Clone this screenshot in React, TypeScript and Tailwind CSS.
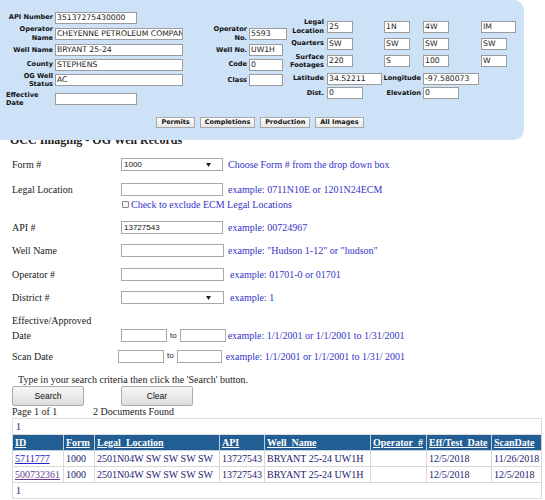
import React from "react";

const PIn = ({ w, v = "" }: { w: string; v?: string }) => (
  <div
    className={`${w} h-[12px] shrink-0 border border-[#9c9c9c] bg-white overflow-hidden whitespace-nowrap text-[7.7px] leading-[10px] pl-[1px] text-[#222] font-['DejaVu_Sans',sans-serif]`}
  >
    {v}
  </div>
);

const PLabel = ({ w, children, left = false }: { w: string; children: React.ReactNode; left?: boolean }) => (
  <div
    className={`${w} shrink-0 flex ${left ? "justify-start pl-[2px] text-left" : "justify-end text-right"} text-[6.6px] font-bold leading-[8.3px] text-[#111] font-['DejaVu_Sans',sans-serif] whitespace-nowrap`}
  >
    <div>{children}</div>
  </div>
);

const PBtn = ({ children }: { children: React.ReactNode }) => (
  <div className="h-[11px] px-[4px] flex items-center border border-[#a8a8a8] bg-gradient-to-b from-[#ffffff] to-[#e6e6e6] text-[6.5px] font-bold text-[#111] font-['DejaVu_Sans',sans-serif] leading-[9px]">
    {children}
  </div>
);

const FIn = ({ w, v = "" }: { w: string; v?: string }) => (
  <div
    className={`${w} h-[13px] shrink-0 border border-[#a9a9a9] bg-white flex items-center pl-[2px] text-[8px] text-[#111] font-['Liberation_Sans',sans-serif] overflow-hidden whitespace-nowrap`}
  >
    {v}
  </div>
);

const FSelect = ({ v = "" }: { v?: string }) => (
  <div className="w-[102px] h-[13px] shrink-0 border border-[#a9a9a9] bg-white flex items-center justify-between pl-[2px] pr-[11px] text-[8px] text-[#111] font-['Liberation_Sans',sans-serif]">
    <span>{v}</span>
    <svg width="5" height="4" viewBox="0 0 5 4">
      <polygon points="0,0 5,0 2.5,4" fill="#222" />
    </svg>
  </div>
);

const Ex = ({ children, ml = "ml-[5px]" }: { children: React.ReactNode; ml?: string }) => (
  <span className={`${ml} text-[#3434c8] whitespace-nowrap`}>{children}</span>
);

const To = () => (
  <span className="mx-[3px] text-[8px] text-[#222] font-['Liberation_Sans',sans-serif]">to</span>
);

const headers = ["ID", "Form", "Legal_Location", "API", "Well_Name", "Operator_#", "Eff/Test_Date", "ScanDate"];

const rows = [
  { id: "5711777", visited: false, form: "1000", loc: "2501N04W SW SW SW SW", api: "13727543", name: "BRYANT 25-24 UW1H", op: "", eff: "12/5/2018", scan: "11/26/2018" },
  { id: "500732361", visited: true, form: "1000", loc: "2501N04W SW SW SW SW", api: "13727543", name: "BRYANT 25-24 UW1H", op: "", eff: "12/5/2018", scan: "12/5/2018" },
];

export default function App() {
  return (
    <div className="relative w-[545px] h-[500px] overflow-hidden bg-white font-['Liberation_Serif',serif] text-[10px] text-[#222]">
      {/* Overlay panel */}
      <div className="absolute left-0 top-0 z-10 w-[524px] h-[140px] bg-[#cde1f7] rounded-tr-[10px] rounded-br-[10px] pt-[10px] flex flex-col">
        <div className="flex items-start h-[99px]">
          {/* Column 1 */}
          <div className="ml-[4px] flex flex-col">
            <div className="h-[15px] flex items-center gap-[2px]">
              <PLabel w="w-[49px]">API Number</PLabel>
              <PIn w="w-[82px]" v="35137275430000" />
            </div>
            <div className="h-[17px] flex items-center gap-[2px]">
              <PLabel w="w-[49px]">Operator<br />Name</PLabel>
              <PIn w="w-[128px]" v="CHEYENNE PETROLEUM COMPANY" />
            </div>
            <div className="h-[16px] flex items-center gap-[2px]">
              <PLabel w="w-[49px]">Well Name</PLabel>
              <PIn w="w-[128px]" v="BRYANT 25-24" />
            </div>
            <div className="h-[13px] flex items-center gap-[2px]">
              <PLabel w="w-[49px]">County</PLabel>
              <PIn w="w-[128px]" v="STEPHENS" />
            </div>
            <div className="h-[18px] flex items-center gap-[2px]">
              <PLabel w="w-[49px]">OG Well<br />Status</PLabel>
              <PIn w="w-[128px]" v="AC" />
            </div>
            <div className="h-[20px] flex items-center gap-[2px]">
              <PLabel w="w-[49px]" left>Effective<br />Date</PLabel>
              <PIn w="w-[82px]" v="" />
            </div>
          </div>

          {/* Column 2 */}
          <div className="ml-[28px] mt-[15px] flex flex-col">
            <div className="h-[17px] flex items-center gap-[2px]">
              <PLabel w="w-[36px]">Operator<br />No.</PLabel>
              <PIn w="w-[38px]" v="5593" />
            </div>
            <div className="h-[16px] flex items-center gap-[2px]">
              <PLabel w="w-[36px]">Well No.</PLabel>
              <PIn w="w-[34px]" v="UW1H" />
            </div>
            <div className="h-[13px] flex items-center gap-[2px]">
              <PLabel w="w-[36px]">Code</PLabel>
              <PIn w="w-[34px]" v="0" />
            </div>
            <div className="h-[18px] flex items-center gap-[2px]">
              <PLabel w="w-[36px]">Class</PLabel>
              <PIn w="w-[34px]" v="" />
            </div>
          </div>

          {/* Column 3 */}
          <div className="ml-[2px] mt-[8px] flex flex-col">
            <div className="h-[17px] flex items-center">
              <div className="w-[36px] pr-[1px] flex justify-end"><PLabel w="">Legal<br />Location</PLabel></div>
              <div className="w-[58px] pl-[2px]"><PIn w="w-[26px]" v="25" /></div>
              <div className="w-[39px] pl-[1px]"><PIn w="w-[26px]" v="1N" /></div>
              <div className="w-[57px] pl-[1px]"><PIn w="w-[26px]" v="4W" /></div>
              <div className="pl-[2px]"><PIn w="w-[35px]" v="IM" /></div>
            </div>
            <div className="h-[17px] flex items-center">
              <div className="w-[36px] pr-[1px] flex justify-end"><PLabel w="">Quarters</PLabel></div>
              <div className="w-[58px] pl-[2px]"><PIn w="w-[26px]" v="SW" /></div>
              <div className="w-[39px] pl-[1px]"><PIn w="w-[26px]" v="SW" /></div>
              <div className="w-[57px] pl-[1px]"><PIn w="w-[26px]" v="SW" /></div>
              <div className="pl-[2px]"><PIn w="w-[26px]" v="SW" /></div>
            </div>
            <div className="h-[18px] flex items-center">
              <div className="w-[36px] pr-[1px] flex justify-end"><PLabel w="">Surface<br />Footages</PLabel></div>
              <div className="w-[58px] pl-[2px]"><PIn w="w-[26px]" v="220" /></div>
              <div className="w-[39px] pl-[1px]"><PIn w="w-[26px]" v="S" /></div>
              <div className="w-[57px] pl-[1px]"><PIn w="w-[26px]" v="100" /></div>
              <div className="pl-[2px]"><PIn w="w-[26px]" v="W" /></div>
            </div>
            <div className="h-[17px] flex items-center">
              <div className="w-[36px] pr-[1px] flex justify-end"><PLabel w="">Latitude</PLabel></div>
              <div className="w-[58px] pl-[2px]"><PIn w="w-[55px]" v="34.52211" /></div>
              <div className="w-[39px] pr-[1px] flex justify-end"><PLabel w="">Longitude</PLabel></div>
              <div className="w-[57px] pl-[1px]"><PIn w="w-[56px]" v="-97.580073" /></div>
            </div>
            <div className="h-[12px] flex items-center">
              <div className="w-[36px] pr-[1px] flex justify-end"><PLabel w="">Dist.</PLabel></div>
              <div className="w-[58px] pl-[2px]"><PIn w="w-[36px]" v="0" /></div>
              <div className="w-[39px] pr-[1px] flex justify-end"><PLabel w="">Elevation</PLabel></div>
              <div className="w-[57px] pl-[1px]"><PIn w="w-[36px]" v="0" /></div>
            </div>
          </div>
        </div>

        <div className="mt-[8px] flex justify-center gap-[5px] pr-[4px]">
          <PBtn>Permits</PBtn>
          <PBtn>Completions</PBtn>
          <PBtn>Production</PBtn>
          <PBtn>All Images</PBtn>
        </div>
      </div>

      {/* Page content */}
      <div className="pt-[133px] pl-[12px]">
        <div className="ml-[-2px] h-[14px] leading-[14px] text-[12px] font-bold text-[#222] whitespace-nowrap">
          OCC Imaging - OG Well Records
        </div>

        <div className="mt-[11px] flex items-center h-[13px]">
          <div className="w-[109px] shrink-0">Form #</div>
          <FSelect v="1000" />
          <Ex>Choose Form # from the drop down box</Ex>
        </div>

        <div className="mt-[12px] flex items-center h-[13px]">
          <div className="w-[109px] shrink-0">Legal Location</div>
          <FIn w="w-[102px]" />
          <Ex>example: 0711N10E or 1201N24ECM</Ex>
        </div>

        <div className="mt-[3px] flex items-center h-[10px]">
          <div className="ml-[110px] w-[7px] h-[7px] shrink-0 border border-[#8a8a8a] bg-[#f3f3f3] rounded-[1px]" />
          <span className="ml-[2px] text-[#3434c8] whitespace-nowrap">Check to exclude ECM Legal Locations</span>
        </div>

        <div className="mt-[12px] flex items-center h-[13px]">
          <div className="w-[109px] shrink-0">API #</div>
          <FIn w="w-[102px]" v="13727543" />
          <Ex>example: 00724967</Ex>
        </div>

        <div className="mt-[10px] flex items-center h-[13px]">
          <div className="w-[109px] shrink-0">Well Name</div>
          <FIn w="w-[103px]" />
          <Ex ml="ml-[4px]">example: "Hudson 1-12" or "hudson"</Ex>
        </div>

        <div className="mt-[11px] flex items-center h-[13px]">
          <div className="w-[109px] shrink-0">Operator #</div>
          <FIn w="w-[103px]" />
          <Ex ml="ml-[6px]">example: 01701-0 or 01701</Ex>
        </div>

        <div className="mt-[10px] flex items-center h-[13px]">
          <div className="w-[109px] shrink-0">District #</div>
          <div className="w-[103px] h-[13px] shrink-0 border border-[#a9a9a9] bg-white flex items-center justify-end pr-[12px]">
            <svg width="5" height="4" viewBox="0 0 5 4">
              <polygon points="0,0 5,0 2.5,4" fill="#222" />
            </svg>
          </div>
          <Ex ml="ml-[6px]">example: 1</Ex>
        </div>

        <div className="mt-[8.5px] flex items-start">
          <div className="w-[109px] shrink-0 leading-[15px]">
            Effective/Approved
            <br />
            Date
          </div>
          <div className="mt-[16.5px] flex items-center h-[13px]">
            <FIn w="w-[46px]" />
            <To />
            <FIn w="w-[46px]" />
            <Ex ml="ml-[2px]">example: 1/1/2001 or 1/1/2001 to 1/31/2001</Ex>
          </div>
        </div>

        <div className="mt-[7px] flex items-center h-[13px]">
          <div className="w-[106px] shrink-0">Scan Date</div>
          <FIn w="w-[46px]" />
          <To />
          <FIn w="w-[45px]" />
          <Ex ml="ml-[4px]">example: 1/1/2001 or 1/1/2001 to 1/31/ 2001</Ex>
        </div>

        <div className="mt-[11.5px] h-[12px] leading-[12px] pl-[6px] whitespace-nowrap">
          Type in your search criteria then click the 'Search' button.
        </div>

        <div className="flex h-[20px]">
          <div className="w-[72px] h-[20px] flex items-center justify-center border border-[#adadad] rounded-[2px] bg-gradient-to-b from-[#f7f7f7] to-[#dddddd] text-[8.5px] text-[#111] font-['Liberation_Sans',sans-serif]">
            Search
          </div>
          <div className="ml-[37px] w-[72px] h-[20px] flex items-center justify-center border border-[#adadad] rounded-[2px] bg-gradient-to-b from-[#f7f7f7] to-[#dddddd] text-[8.5px] text-[#111] font-['Liberation_Sans',sans-serif]">
            Clear
          </div>
        </div>

        <div className="h-[12px] leading-[12px] flex whitespace-nowrap">
          <span className="w-[81px] shrink-0">Page 1 of 1</span>
          <span>2 Documents Found</span>
        </div>

        <table className="table-fixed border-collapse w-[529px] text-[10px] leading-[12px] text-[#1a1a6e]">
          <colgroup>
            <col className="w-[51px]" />
            <col className="w-[31px]" />
            <col className="w-[125px]" />
            <col className="w-[45px]" />
            <col className="w-[106px]" />
            <col className="w-[56px]" />
            <col className="w-[65px]" />
            <col className="w-[50px]" />
          </colgroup>
          <tbody>
            <tr className="h-[16px]">
              <td colSpan={8} className="border border-[#dcdcdc] px-[3px]">1</td>
            </tr>
            <tr className="h-[16px] bg-[#215e94]">
              {headers.map((h) => (
                <th key={h} className="border border-[#c6d0da] px-[2px] text-left font-bold text-white underline whitespace-nowrap overflow-hidden">
                  {h}
                </th>
              ))}
            </tr>
            {rows.map((r) => (
              <tr key={r.id} className="h-[16px]">
                <td className="border border-[#d8d8d8] px-[2px] whitespace-nowrap">
                  <span className={`underline ${r.visited ? "text-[#6b3c98]" : "text-[#2424c4]"}`}>{r.id}</span>
                </td>
                <td className="border border-[#d8d8d8] px-[2px] whitespace-nowrap">{r.form}</td>
                <td className="border border-[#d8d8d8] px-[2px] whitespace-nowrap">{r.loc}</td>
                <td className="border border-[#d8d8d8] px-[2px] whitespace-nowrap">{r.api}</td>
                <td className="border border-[#d8d8d8] px-[2px] whitespace-nowrap">{r.name}</td>
                <td className="border border-[#d8d8d8] px-[2px] whitespace-nowrap">{r.op}</td>
                <td className="border border-[#d8d8d8] px-[2px] whitespace-nowrap">{r.eff}</td>
                <td className="border border-[#d8d8d8] px-[2px] whitespace-nowrap">{r.scan}</td>
              </tr>
            ))}
            <tr className="h-[16px]">
              <td colSpan={8} className="border border-[#dcdcdc] px-[3px]">1</td>
            </tr>
          </tbody>
        </table>
      </div>
    </div>
  );
}
